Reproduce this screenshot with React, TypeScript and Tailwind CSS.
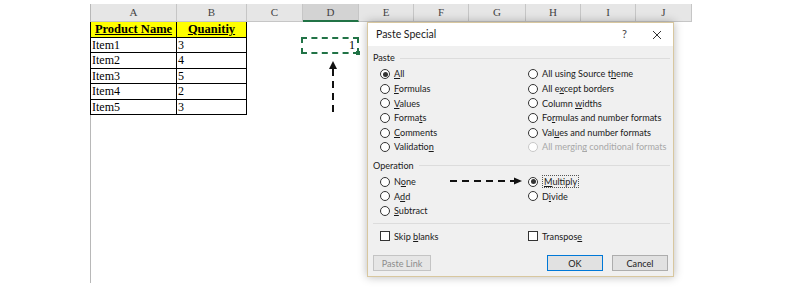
import React from "react";

const cols = [
  { key: "A", w: "w-[86px]" },
  { key: "B", w: "w-[70px]" },
  { key: "C", w: "w-[56px]" },
  { key: "D", w: "w-[56px]" },
  { key: "E", w: "w-[55px]" },
  { key: "F", w: "w-[55px]" },
  { key: "G", w: "w-[57px]" },
  { key: "H", w: "w-[55px]" },
  { key: "I", w: "w-[55px]" },
  { key: "J", w: "w-[56px]" },
];

const rows = [
  ["Item1", "3"],
  ["Item2", "4"],
  ["Item3", "5"],
  ["Item4", "2"],
  ["Item5", "3"],
];

// label with one underlined access key: [before, key, after]
type Lbl = [string, string, string];

function Label({ t }: { t: Lbl }) {
  return (
    <span className="whitespace-nowrap">
      {t[0]}
      <span className="underline underline-offset-[1px]">{t[1]}</span>
      {t[2]}
    </span>
  );
}

function Radio({ checked, disabled }: { checked?: boolean; disabled?: boolean }) {
  return (
    <span
      className={
        "flex h-[10px] w-[10px] shrink-0 items-center justify-center rounded-full border bg-white " +
        (disabled ? "border-[#c8c8c8]" : "border-[#333]")
      }
    >
      {checked && <span className="h-[5px] w-[5px] rounded-full bg-[#333]" />}
    </span>
  );
}

function RadioRow({ t, checked, disabled, focus }: { t: Lbl; checked?: boolean; disabled?: boolean; focus?: boolean }) {
  return (
    <div className={"flex h-[14.6px] items-center gap-[4px] " + (disabled ? "text-[#a8a8a8]" : "text-[#1a1a1a]")}>
      <Radio checked={checked} disabled={disabled} />
      <span className={focus ? "border border-dotted border-[#555] px-[1px] leading-[11px]" : ""}>
        <Label t={t} />
      </span>
    </div>
  );
}

function Group({ title }: { title: string }) {
  return (
    <div className="flex h-[14px] items-center gap-[5px] text-[#1a1a1a]">
      <span>{title}</span>
      <span className="mr-[3px] h-px flex-1 bg-[#dcdcdc]" />
    </div>
  );
}

function Dialog() {
  return (
    <div className="absolute left-[367px] top-[22px] flex h-[255px] w-[307px] flex-col border border-[#d8c79f] bg-[#f0f0f0] shadow-[0_0_9px_rgba(0,0,0,0.28)] font-['Lato','Open_Sans',sans-serif] text-[9.1px]">
      <div className="flex h-[23px] items-center bg-white pl-[8px] text-[10.5px] text-[#1a1a1a]">
        <span className="flex-1">Paste Special</span>
        <span className="mr-[25px] text-[11px] text-[#444]">?</span>
        <svg width="10" height="10" viewBox="0 0 10 10" className="mr-[11px]">
          <path d="M1 1 L9 9 M9 1 L1 9" stroke="#333" strokeWidth="1" />
        </svg>
      </div>
      <div className="relative flex flex-1 flex-col pl-[5px] pt-[5px]">
        <Group title="Paste" />
        <div className="mt-[2px] grid grid-cols-[148px_1fr] pl-[7px]">
          <div>
            <RadioRow t={["", "A", "ll"]} checked />
            <RadioRow t={["", "F", "ormulas"]} />
            <RadioRow t={["", "V", "alues"]} />
            <RadioRow t={["Forma", "t", "s"]} />
            <RadioRow t={["", "C", "omments"]} />
            <RadioRow t={["Validatio", "n", ""]} />
          </div>
          <div>
            <RadioRow t={["All using Source t", "h", "eme"]} />
            <RadioRow t={["All e", "x", "cept borders"]} />
            <RadioRow t={["Column ", "w", "idths"]} />
            <RadioRow t={["Fo", "r", "mulas and number formats"]} />
            <RadioRow t={["Val", "u", "es and number formats"]} />
            <RadioRow t={["All mergin", "g", " conditional formats"]} disabled />
          </div>
        </div>
        <div className="mt-[4px]">
          <Group title="Operation" />
        </div>
        <div className="mt-[2px] grid grid-cols-[148px_1fr] pl-[7px]">
          <div>
            <RadioRow t={["N", "o", "ne"]} />
            <RadioRow t={["A", "d", "d"]} />
            <RadioRow t={["", "S", "ubtract"]} />
          </div>
          <div>
            <RadioRow t={["", "M", "ultiply"]} checked focus />
            <RadioRow t={["D", "i", "vide"]} />
          </div>
        </div>
        <div className="mr-[3px] mt-[5px] h-px bg-[#dcdcdc]" />
        <div className="mt-[5px] grid h-[14px] grid-cols-[148px_1fr] items-center pl-[7px] text-[#1a1a1a]">
          <div className="flex items-center gap-[4px]">
            <span className="h-[10px] w-[10px] border border-[#333] bg-white" />
            <Label t={["Skip ", "b", "lanks"]} />
          </div>
          <div className="flex items-center gap-[4px]">
            <span className="h-[10px] w-[10px] border border-[#333] bg-white" />
            <Label t={["Transpos", "e", ""]} />
          </div>
        </div>
        <div className="mt-[12px] flex h-[16px] items-stretch pr-[5px]">
          <button className="w-[58px] border border-[#c4c4c4] bg-[#e6e6e6] text-[#8c8c8c]">Paste Link</button>
          <span className="flex-1" />
          <button className="w-[56px] border border-[#0078d7] bg-[#e1e1e1] text-[#1a1a1a]">OK</button>
          <button className="ml-[9px] w-[56px] border border-[#adadad] bg-[#e1e1e1] text-[#1a1a1a]">Cancel</button>
        </div>
        {/* dashed arrow pointing at Multiply */}
        <svg className="absolute left-[82px] top-[130px]" width="76" height="10" viewBox="0 0 76 10">
          <path d="M0 5 H66" stroke="#111" strokeWidth="1.8" strokeDasharray="7 5" />
          <path d="M64 1.5 L72 5 L64 8.5 Z" fill="#111" />
        </svg>
      </div>
    </div>
  );
}

export default function App() {
  return (
    <div className="relative h-[293px] w-[785px] overflow-hidden bg-white">
      <div className="ml-[90px] mt-[4px] flex h-[279px] flex-col border-l border-[#b8b8b8] font-['Liberation_Serif',serif]">
        <div className="flex h-[18px]">
          {cols.map((c) => (
            <div
              key={c.key}
              className={
                c.w +
                " flex items-center justify-center border-r border-[#c6c6c6] text-[11px] text-[#444] " +
                (c.key === "D" ? "border-b-2 border-b-[#217346] bg-[#d3d3d3]" : "border-b border-b-[#c6c6c6] bg-[#e6e6e6]")
              }
            >
              {c.key}
            </div>
          ))}
        </div>
        <div className="flex h-[15.5px] text-[12.5px] font-bold">
          <div className="-ml-px flex w-[87px] items-center justify-center border-x border-b border-black bg-[#ffff00] underline">
            Product Name
          </div>
          <div className="flex w-[70px] items-center justify-center border-r border-b border-black bg-[#ffff00] underline">
            Quanitiy
          </div>
        </div>
        {rows.map((r, i) => (
          <div key={r[0]} className="flex h-[15.5px] text-[12px] text-black">
            <div className="-ml-px flex w-[87px] items-center border-x border-b border-black pl-[1px]">{r[0]}</div>
            <div className="flex w-[70px] items-center border-r border-b border-black pl-[1px]">{r[1]}</div>
            {i === 0 && (
              <>
                <div className="w-[54px]" />
                <div className="relative -mt-px flex h-[17px] w-[58px] items-center justify-end border-2 border-dashed border-[#217346] pr-[2px]">
                  1
                  <span className="absolute -bottom-[3px] -right-[3px] h-[4px] w-[4px] bg-[#217346]" />
                </div>
              </>
            )}
          </div>
        ))}
      </div>
      {/* dashed arrow pointing at D2 */}
      <svg className="absolute left-[328px] top-[60px]" width="10" height="54" viewBox="0 0 10 54">
        <path d="M5 9 V53" stroke="#111" strokeWidth="2" strokeDasharray="7 5" />
        <path d="M1 9 L5 1 L9 9 Z" fill="#111" />
      </svg>
      <Dialog />
    </div>
  );
}
